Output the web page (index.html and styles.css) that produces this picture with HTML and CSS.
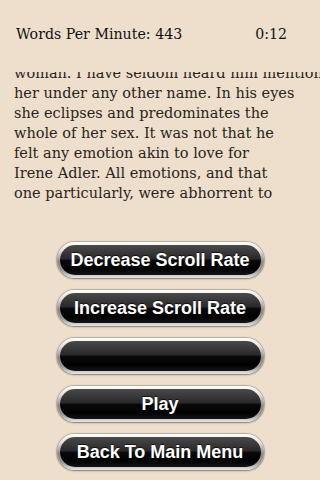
FILE: index.html
```html
<!DOCTYPE html>
<html>
<head>
<meta charset="utf-8">
<link rel="stylesheet" href="styles.css">
</head>
<body>
<div class="screen">
  <div class="header">
    <span class="wpm">Words Per Minute: 443</span>
    <span class="time">0:12</span>
  </div>
  <div class="reader">
    <div class="reader-text">
      <p class="line">woman. I have seldom heard him mention</p>
      <p class="line">her under any other name. In his eyes</p>
      <p class="line">she eclipses and predominates the</p>
      <p class="line">whole of her sex. It was not that he</p>
      <p class="line">felt any emotion akin to love for</p>
      <p class="line">Irene Adler. All emotions, and that</p>
      <p class="line">one particularly, were abhorrent to</p>
    </div>
  </div>
  <div class="buttons">
    <div class="btn"><span class="btn-inner">Decrease Scroll Rate</span></div>
    <div class="btn"><span class="btn-inner">Increase Scroll Rate</span></div>
    <div class="btn"><span class="btn-inner"></span></div>
    <div class="btn"><span class="btn-inner">Play</span></div>
    <div class="btn"><span class="btn-inner">Back To Main Menu</span></div>
  </div>
</div>
</body>
</html>
```
FILE: styles.css
```css
html, body {
  margin: 0;
  padding: 0;
  background: #eedfcc;
}
.screen {
  width: 320px;
  height: 480px;
  overflow: hidden;
  background: #eedfcc;
  display: flex;
  flex-direction: column;
}
.header {
  display: flex;
  justify-content: space-between;
  align-items: center;
  height: 72px;
  padding: 0 33px 5px 16px;
  font-family: "DejaVu Serif", Georgia, serif;
  font-size: 14.2px;
  color: #111;
  box-sizing: border-box;
}
.reader {
  height: 135px;
  overflow: hidden;
}
.reader-text {
  margin-top: -9px;
  padding-left: 14px;
  font-family: "DejaVu Serif", Georgia, serif;
  font-size: 14.5px;
  line-height: 20px;
  color: #2a2520;
}
.line {
  margin: 0;
  white-space: nowrap;
}
.buttons {
  margin-top: 35px;
  display: flex;
  flex-direction: column;
  align-items: center;
  gap: 12px;
}
.btn {
  width: 207px;
  height: 36px;
  box-sizing: border-box;
  padding: 3px;
  border-radius: 18px;
  background: linear-gradient(#ffffff 0%, #e0e0e0 25%, #8a8a8a 55%, #9a9a9a 80%, #e8e8e8 100%);
  box-shadow: 0 0 1px 1px rgba(90, 80, 70, 0.35), 0 1px 2px rgba(0,0,0,0.3);
}
.btn-inner {
  display: flex;
  align-items: center;
  justify-content: center;
  height: 100%;
  border-radius: 15px;
  background: linear-gradient(#4a4a4a 0%, #2a2a2a 45%, #0a0a0a 52%, #000 80%, #151515 100%);
  color: #fff;
  font-family: "Liberation Sans", Arial, sans-serif;
  font-weight: bold;
  font-size: 18px;
  text-shadow: 0 -1px 0 rgba(0,0,0,0.6);
}
```
